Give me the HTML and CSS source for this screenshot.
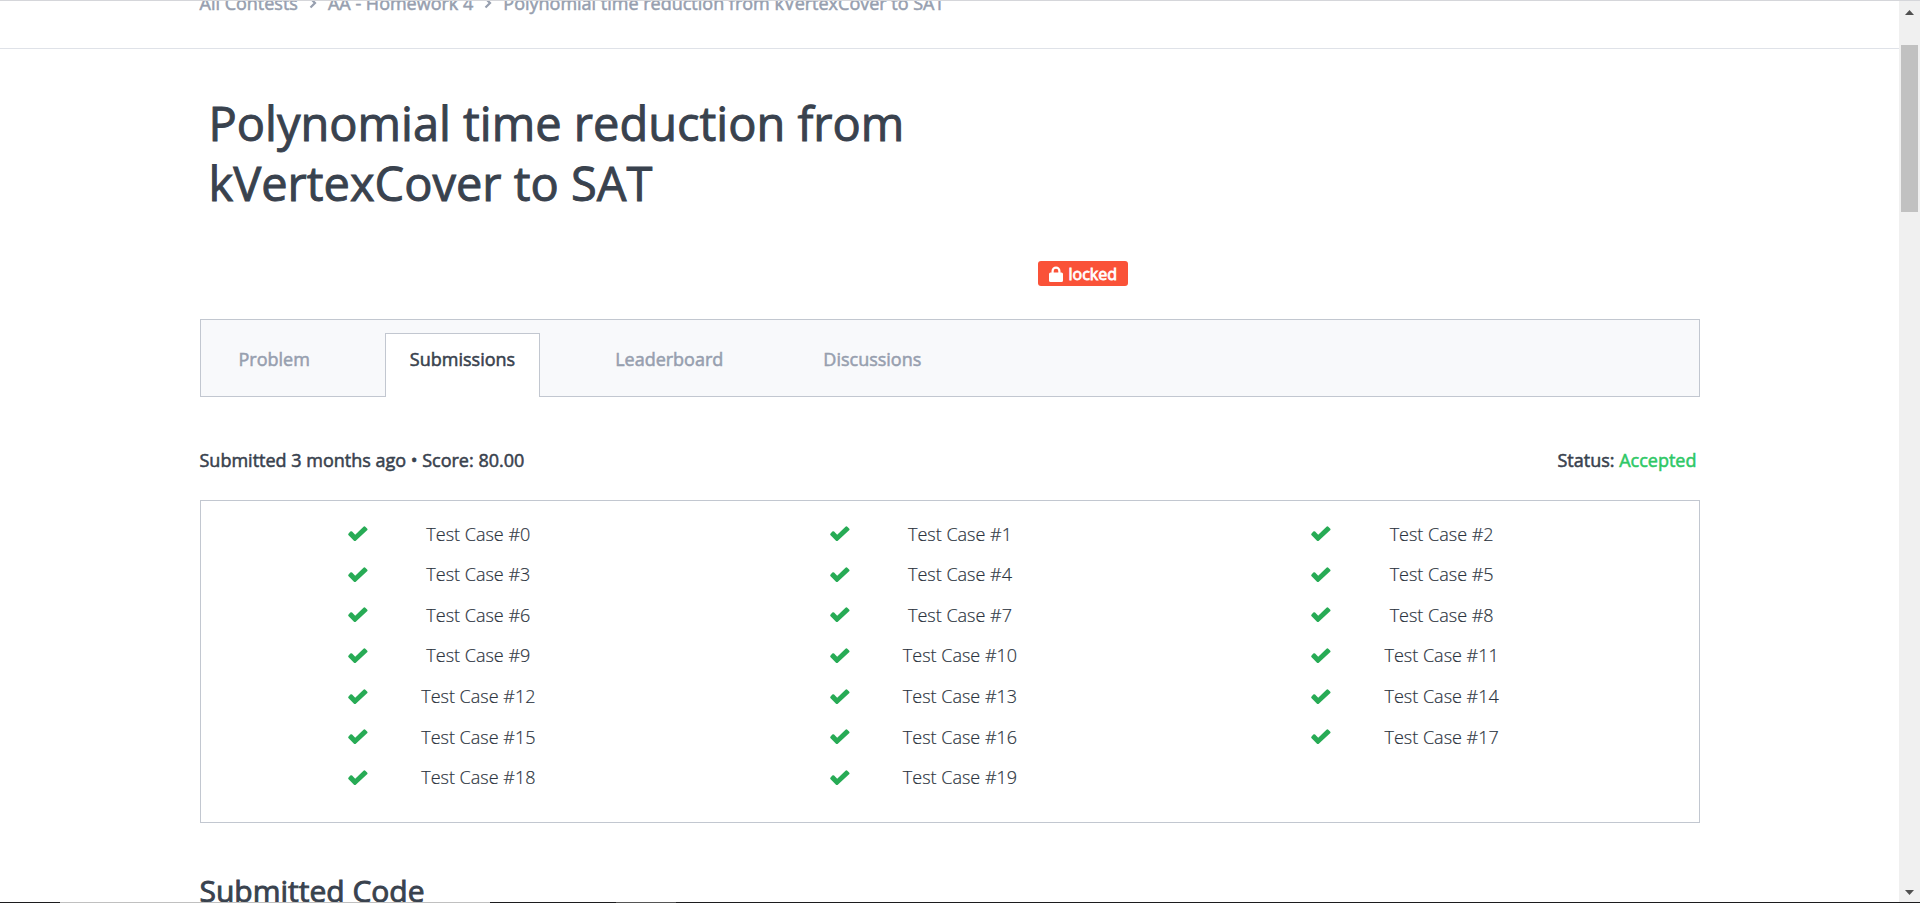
FILE: index.html
```html
<!DOCTYPE html>
<html lang="en">
<head>
<meta charset="utf-8">
<title>Polynomial time reduction from kVertexCover to SAT</title>
<link rel="stylesheet" href="styles.css">
</head>
<body>
<svg width="0" height="0" class="sprite" aria-hidden="true">
  <symbol id="check" viewBox="0 0 20 15"><path d="M7.8 14.7a1.5 1.5 0 0 1-1.8 0L.6 9.2a1.3 1.3 0 0 1 0-1.8l1.7-1.8a1.3 1.3 0 0 1 1.8 0l3.1 3.1L15.5.7a1.3 1.3 0 0 1 1.8 0l1.8 1.8a1.3 1.3 0 0 1 0 1.8z"/></symbol>
  <symbol id="chevron" viewBox="0 0 8 12"><path d="M1.5 1.5 6 6l-4.5 4.5" fill="none" stroke="currentColor" stroke-width="2.2"/></symbol>
</svg>
<div class="window">
  <div class="view">
    <div class="page">
      <header class="topbar">
        <nav class="container crumbs" aria-label="Breadcrumb">
          <a href="#">All Contests</a>
          <svg class="chevron"><use href="#chevron"/></svg>
          <a href="#">AA - Homework 4</a>
          <svg class="chevron"><use href="#chevron"/></svg>
          <a href="#">Polynomial time reduction from kVertexCover to SAT</a>
        </nav>
      </header>
      <main class="container">
        <h1 class="title">Polynomial time reduction from kVertexCover to SAT</h1>
        <div class="badge-row">
          <span class="badge"><svg class="lock" viewBox="0 0 14 16"><path d="M1.5 6.500H2.500V5a4.500 4.500 0 0 1 9 0v1.500h1A1.500 1.500 0 0 1 14 8v6.500a1.500 1.500 0 0 1-1.500 1.500h-11A1.500 1.500 0 0 1 0 14.500V8a1.500 1.500 0 0 1 1.500-1.500zM4.700 6.500h4.600V5a2.300 2.300 0 0 0-4.600 0z" fill="currentColor" fill-rule="evenodd"/></svg>locked</span>
        </div>
        <nav class="tabs" aria-label="Challenge">
          <a class="tab" href="#">Problem</a>
          <a class="tab active" href="#" aria-current="page">Submissions</a>
          <a class="tab" href="#">Leaderboard</a>
          <a class="tab" href="#">Discussions</a>
        </nav>
        <div class="summary">
          <p>Submitted 3 months ago • Score: 80.00</p>
          <p class="status">Status: <span class="accepted">Accepted</span></p>
        </div>
        <ul class="cases">
          <li class="case"><svg class="check"><use href="#check"/></svg><span>Test Case #0</span></li>
          <li class="case"><svg class="check"><use href="#check"/></svg><span>Test Case #1</span></li>
          <li class="case"><svg class="check"><use href="#check"/></svg><span>Test Case #2</span></li>
          <li class="case"><svg class="check"><use href="#check"/></svg><span>Test Case #3</span></li>
          <li class="case"><svg class="check"><use href="#check"/></svg><span>Test Case #4</span></li>
          <li class="case"><svg class="check"><use href="#check"/></svg><span>Test Case #5</span></li>
          <li class="case"><svg class="check"><use href="#check"/></svg><span>Test Case #6</span></li>
          <li class="case"><svg class="check"><use href="#check"/></svg><span>Test Case #7</span></li>
          <li class="case"><svg class="check"><use href="#check"/></svg><span>Test Case #8</span></li>
          <li class="case"><svg class="check"><use href="#check"/></svg><span>Test Case #9</span></li>
          <li class="case"><svg class="check"><use href="#check"/></svg><span>Test Case #10</span></li>
          <li class="case"><svg class="check"><use href="#check"/></svg><span>Test Case #11</span></li>
          <li class="case"><svg class="check"><use href="#check"/></svg><span>Test Case #12</span></li>
          <li class="case"><svg class="check"><use href="#check"/></svg><span>Test Case #13</span></li>
          <li class="case"><svg class="check"><use href="#check"/></svg><span>Test Case #14</span></li>
          <li class="case"><svg class="check"><use href="#check"/></svg><span>Test Case #15</span></li>
          <li class="case"><svg class="check"><use href="#check"/></svg><span>Test Case #16</span></li>
          <li class="case"><svg class="check"><use href="#check"/></svg><span>Test Case #17</span></li>
          <li class="case"><svg class="check"><use href="#check"/></svg><span>Test Case #18</span></li>
          <li class="case"><svg class="check"><use href="#check"/></svg><span>Test Case #19</span></li>
        </ul>
        <h2 class="subtitle">Submitted Code</h2>
      </main>
    </div>
    <div class="scrollbar">
      <button class="arrow" type="button" aria-label="Scroll up"><svg viewBox="0 0 9 5" width="9" height="5"><path d="M0 5 4.500 0 9 5z"/></svg></button>
      <div class="thumb"></div>
      <button class="arrow down" type="button" aria-label="Scroll down"><svg viewBox="0 0 9 5" width="9" height="5"><path d="M0 0 4.500 5 9 0z"/></svg></button>
    </div>
  </div>
  <div class="edge"></div>
</div>
</body>
</html>
```
FILE: styles.css
```css
* { box-sizing: border-box; }

body {
  margin: 0;
  background: #fff;
  color: #39424e;
  font-family: "Open Sans", "Noto Sans", sans-serif;
  font-size: 18px;
  line-height: 24px;
  font-weight: 400;
}

h1, h2, p, ul { margin: 0; padding: 0; }
a { color: inherit; text-decoration: none; }
.sprite { position: absolute; }

/* Slightly emboldened regular weight for headings and labels. */
.crumbs, .tab, .summary, .subtitle { -webkit-text-stroke: 0.03em; }
.title { -webkit-text-stroke: 0.02em; }
.badge { -webkit-text-stroke: 0.05em; }

.window {
  display: flex;
  flex-direction: column;
  height: 100vh;
  border-top: 1px solid #d5d6da;
  overflow: hidden;
}

.view { flex: 1; display: flex; min-height: 0; }
.page { flex: 1; min-width: 0; overflow: hidden; }
.container { max-width: 1500px; margin: 0 auto; }

/* The page is scrolled past the upper part of the bar. */
.topbar {
  margin-top: -26px;
  padding: 16px 0 33px;
  border-bottom: 1px solid #dfe2e8;
  color: #979faf;
}

.crumbs { display: flex; align-items: center; gap: 11px; }
.chevron { width: 8px; height: 12px; }

.title {
  width: 50%;
  padding: 44px 9px 0;
  font-size: 47px;
  line-height: 60px;
  font-weight: 400;
}

.badge-row { padding: 48px 0 32px 838px; }

.badge {
  display: inline-flex;
  align-items: center;
  gap: 6px;
  height: 25px;
  padding: 0 11px;
  border-radius: 3px;
  background: #fa5238;
  color: #fff;
  font-size: 16px;
}
.lock { width: 14px; height: 16px; }

.tabs {
  display: flex;
  align-items: flex-end;
  gap: 50px;
  height: 78px;
  padding-left: 13px;
  border: 1px solid #c2c7d0;
  background: #f8f9fb;
  color: #979faf;
}

.tab {
  height: 64px;
  margin-bottom: -1px;
  padding: 13px 24px;
  border: 1px solid transparent;
  border-bottom: 0;
}
.tab.active { background: #fff; border-color: #c2c7d0; color: #39424e; }

.summary {
  display: flex;
  justify-content: space-between;
  padding: 51px 3px 28px 0;
}

.accepted { color: #2ec866; }

.cases {
  display: grid;
  grid-template-columns: repeat(3, 1fr);
  grid-auto-rows: 1fr;
  min-height: 323px;
  padding: 13px 16px 24px 37px;
  border: 1px solid #c2c7d0;
  list-style: none;
  color: #2c3440;
  font-weight: 300;
  -webkit-text-stroke: 0.01em;
}

.case {
  display: grid;
  grid-template-columns: 1fr 2fr 2fr 3fr;
  align-items: center;
  justify-items: center;
  white-space: nowrap;
}

.check { grid-column: 2; width: 20px; height: 15px; fill: #27ab55; }

.subtitle {
  padding-top: 46px;
  font-size: 30px;
  line-height: 44px;
  font-weight: 400;
}

.scrollbar {
  display: flex;
  flex-direction: column;
  width: 21px;
  padding: 0 2px;
  background: #f0f0f0;
}

.arrow {
  display: flex;
  justify-content: center;
  align-items: flex-start;
  height: 44px;
  padding: 9px 0 0;
  border: 0;
  background: none;
  fill: #505050;
}
.arrow.down { height: 20px; margin-top: auto; padding-top: 8px; }
.thumb { height: 167px; background: #c1c1c1; }

.edge {
  height: 1px;
  background: linear-gradient(90deg, #1c1c1e 60px, #c0c0c0 60px 490px, #1c1c1e 490px 616px, #555 616px 676px, #1c1c1e 676px);
}
```
